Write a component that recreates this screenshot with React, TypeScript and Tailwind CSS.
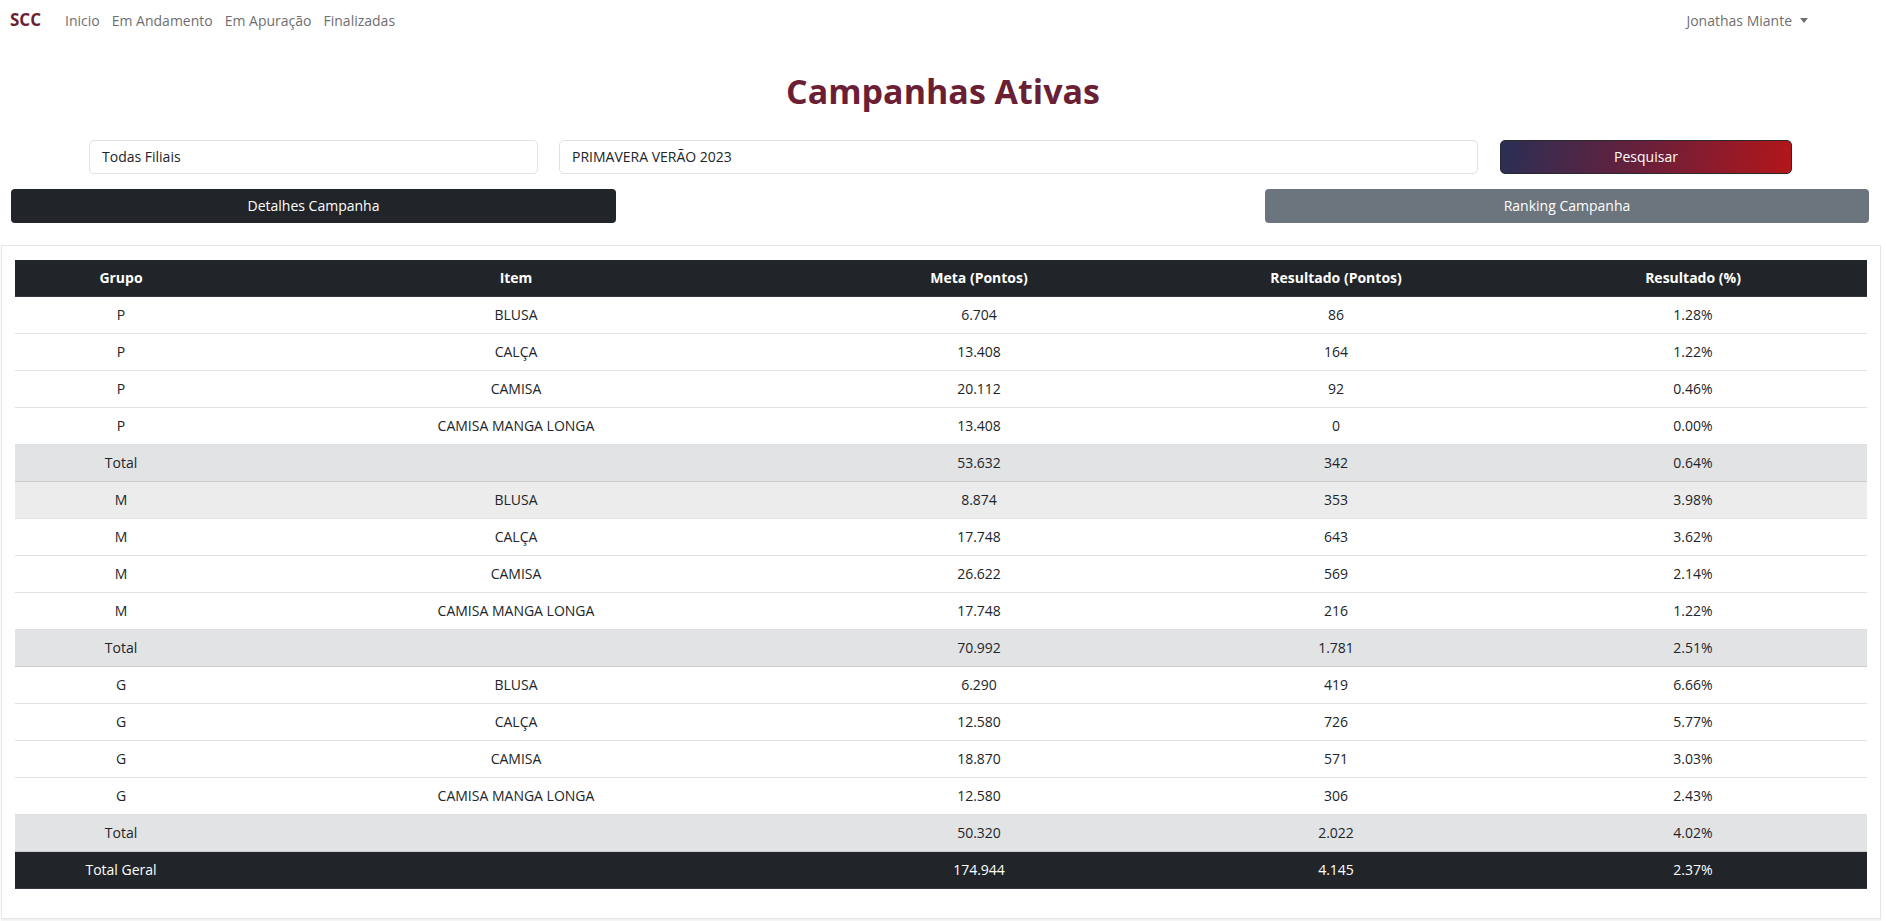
const rows = [
  { grupo: "P", item: "BLUSA", meta: "6.704", res: "86", pct: "1.28%" },
  { grupo: "P", item: "CALÇA", meta: "13.408", res: "164", pct: "1.22%" },
  { grupo: "P", item: "CAMISA", meta: "20.112", res: "92", pct: "0.46%" },
  { grupo: "P", item: "CAMISA MANGA LONGA", meta: "13.408", res: "0", pct: "0.00%" },
  { grupo: "Total", item: "", meta: "53.632", res: "342", pct: "0.64%", total: true },
  { grupo: "M", item: "BLUSA", meta: "8.874", res: "353", pct: "3.98%", hover: true },
  { grupo: "M", item: "CALÇA", meta: "17.748", res: "643", pct: "3.62%" },
  { grupo: "M", item: "CAMISA", meta: "26.622", res: "569", pct: "2.14%" },
  { grupo: "M", item: "CAMISA MANGA LONGA", meta: "17.748", res: "216", pct: "1.22%" },
  { grupo: "Total", item: "", meta: "70.992", res: "1.781", pct: "2.51%", total: true },
  { grupo: "G", item: "BLUSA", meta: "6.290", res: "419", pct: "6.66%" },
  { grupo: "G", item: "CALÇA", meta: "12.580", res: "726", pct: "5.77%" },
  { grupo: "G", item: "CAMISA", meta: "18.870", res: "571", pct: "3.03%" },
  { grupo: "G", item: "CAMISA MANGA LONGA", meta: "12.580", res: "306", pct: "2.43%" },
  { grupo: "Total", item: "", meta: "50.320", res: "2.022", pct: "4.02%", total: true },
];

export default function App() {
  return (
    <div className="min-h-screen bg-white font-['Open_Sans',sans-serif] text-[14px] text-[#212529]">
      {/* navbar */}
      <nav className="flex h-[40px] items-center justify-between pl-[10px] pr-[78px]">
        <div className="flex items-center">
          <span className="mr-[24px] text-[17px] font-bold text-[#6b1f35]">SCC</span>
          <div className="flex items-center gap-[12px] text-[#6f6f6f]">
            <a>Inicio</a>
            <a>Em Andamento</a>
            <a>Em Apuração</a>
            <a>Finalizadas</a>
          </div>
        </div>
        <div className="flex items-center text-[#6f6f6f]">
          <span>Jonathas Miante</span>
          <span className="ml-[8px] h-0 w-0 border-x-[4px] border-t-[5px] border-x-transparent border-t-[#6f6f6f]" />
        </div>
      </nav>

      <h1 className="mt-[31px] text-center text-[34px] font-bold leading-[1.2] text-[#6b1f35]">
        Campanhas Ativas
      </h1>

      {/* filtros */}
      <div className="mt-[28px] flex pl-[89px]">
        <div className="flex h-[34px] w-[449px] items-center rounded-[5px] border border-[#dee2e6] px-[12px]">
          Todas Filiais
        </div>
        <div className="ml-[21px] flex h-[34px] w-[919px] items-center rounded-[5px] border border-[#dee2e6] px-[12px]">
          PRIMAVERA VERÃO 2023
        </div>
        <button className="ml-[22px] h-[34px] w-[292px] rounded-[5px] border border-[#2a2a2a] bg-[linear-gradient(100deg,#2a2f55_0%,#6b1f3a_50%,#b3161a_100%)] text-white">
          Pesquisar
        </button>
      </div>

      <div className="mt-[15px] flex justify-between pl-[11px] pr-[17px]">
        <button className="h-[34px] w-[605px] rounded-[4px] bg-[#212529] text-white">
          Detalhes Campanha
        </button>
        <button className="h-[34px] w-[604px] rounded-[4px] bg-[#6c757d] text-white">
          Ranking Campanha
        </button>
      </div>

      {/* tabela */}
      <div className="ml-[1px] mt-[22px] w-[1880px] border border-[#e4e6ea] px-[13px] pb-[29px] pt-[14px] shadow-[0_2px_2px_rgba(0,0,0,0.06)]">
        <table className="w-[1852px] table-fixed border-collapse text-center leading-5">
          <colgroup>
            <col className="w-[212px]" />
            <col className="w-[578px]" />
            <col className="w-[348px]" />
            <col className="w-[366px]" />
            <col className="w-[348px]" />
          </colgroup>
          <thead>
            <tr className="bg-[#212529] font-bold text-white">
              <th className="border-b border-[#32383e] py-2">Grupo</th>
              <th className="border-b border-[#32383e] py-2">Item</th>
              <th className="border-b border-[#32383e] py-2">Meta (Pontos)</th>
              <th className="border-b border-[#32383e] py-2">Resultado (Pontos)</th>
              <th className="border-b border-[#32383e] py-2">Resultado (%)</th>
            </tr>
          </thead>
          <tbody>
            {rows.map((r, i) => (
              <tr
                key={i}
                className={
                  r.total
                    ? "border-b border-[#cbccce] bg-[#e2e3e5]"
                    : r.hover
                      ? "border-b border-[#dee2e6] bg-[#ececec]"
                      : "border-b border-[#dee2e6]"
                }
              >
                <td className="py-2">{r.grupo}</td>
                <td className="py-2">{r.item}</td>
                <td className="py-2">{r.meta}</td>
                <td className="py-2">{r.res}</td>
                <td className="py-2">{r.pct}</td>
              </tr>
            ))}
            <tr className="border-b border-[#32383e] bg-[#212529] text-white">
              <td className="py-2">Total Geral</td>
              <td className="py-2"></td>
              <td className="py-2">174.944</td>
              <td className="py-2">4.145</td>
              <td className="py-2">2.37%</td>
            </tr>
          </tbody>
        </table>
      </div>
    </div>
  );
}
